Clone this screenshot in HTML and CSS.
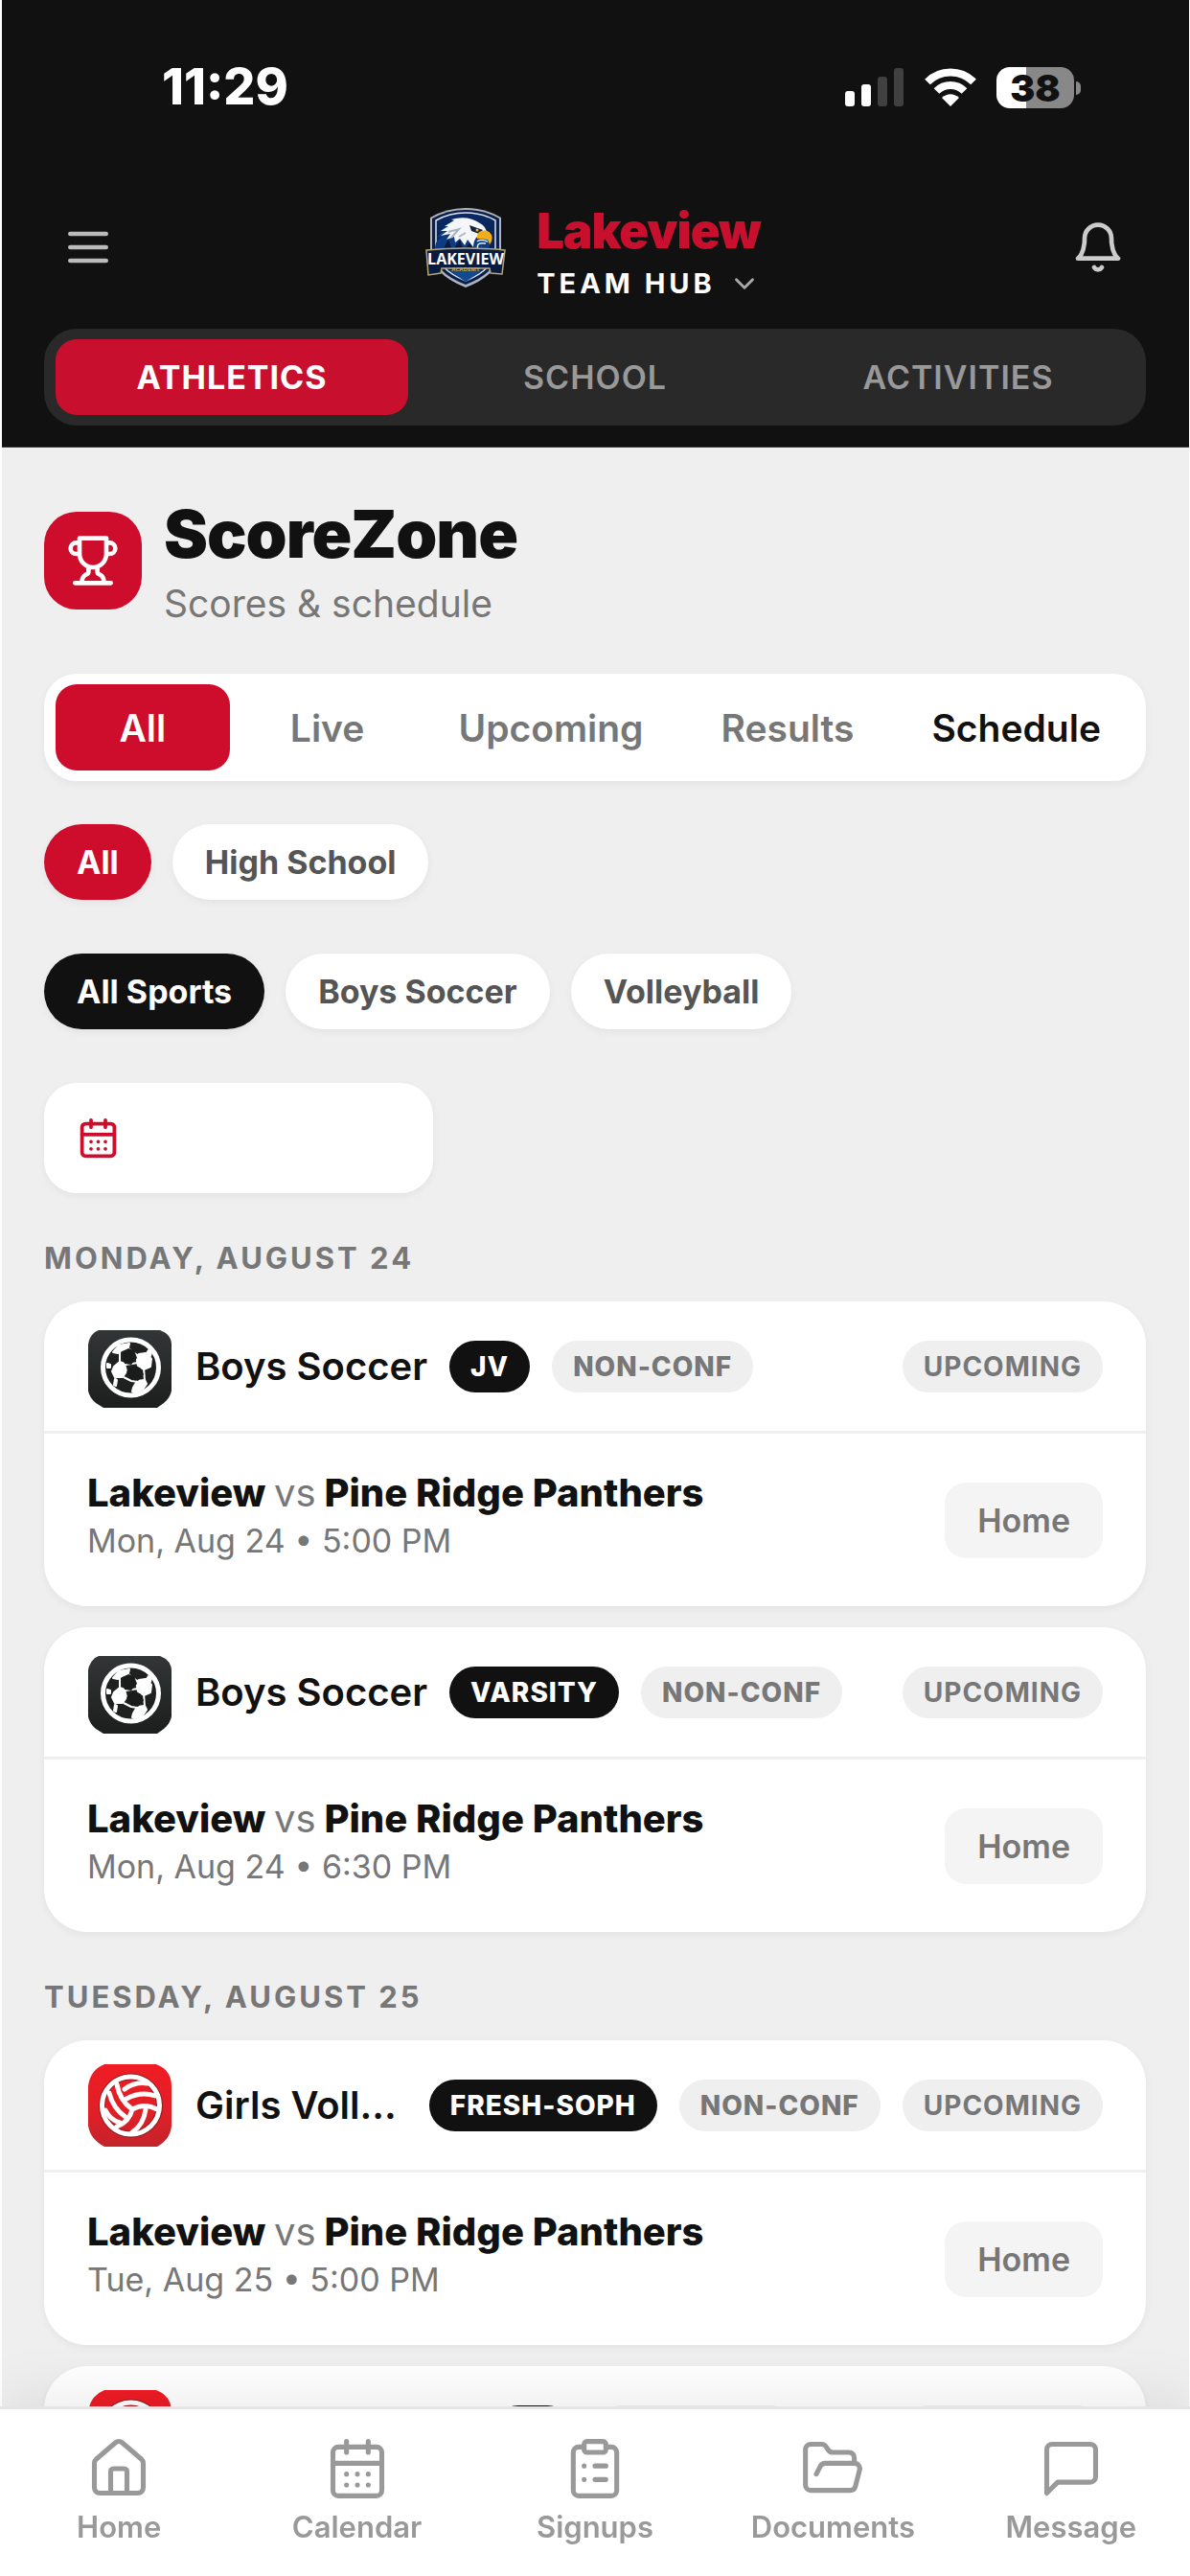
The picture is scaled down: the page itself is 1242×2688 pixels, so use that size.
FILE: index.html
```html
<!DOCTYPE html>
<html lang="en">
<head>
<meta charset="utf-8">
<meta name="viewport" content="width=device-width, initial-scale=1">
<title>ScoreZone</title>
<link rel="stylesheet" href="styles.css">
</head>
<body>
<svg class="sprite" aria-hidden="true">
  <defs>
    <linearGradient id="dark" x1="0" y1="0" x2="0" y2="1"><stop offset="0" stop-color="#333636"/><stop offset="1" stop-color="#1c1e1e"/></linearGradient>
    <linearGradient id="red" x1="0" y1="0" x2="0" y2="1"><stop offset="0" stop-color="#f01c24"/><stop offset=".6" stop-color="#e01f27"/><stop offset="1" stop-color="#c3232b"/></linearGradient>
    <linearGradient id="navy" x1="0" y1="0" x2="0" y2="1"><stop offset="0" stop-color="#0a2a66"/><stop offset="1" stop-color="#06183c"/></linearGradient>
  </defs>
  <symbol id="soccer" viewBox="0 0 90 90">
    <path d="M12 7H76L82 10Q88 15 88 22V70Q87 77 80 83L73 88H17L9 83Q2 77 1 70V22Q2 14 8 9Z" fill="url(#dark)"/>
    <circle cx="45.500" cy="46" r="29" fill="#1f2121" stroke="#fff" stroke-width="5"/>
    <g fill="#fff" stroke="#fff" stroke-width="2" stroke-linejoin="round">
      <path d="M27 30 33 23 44 21 43 25 36 28 32 31Z"/>
      <path d="M28 45 34 40 39 42 41 50 37 56 29 56 26 50Z"/>
      <path d="M51 34 54 32 61 31 67 37 66 45 59 48 53 44Z"/>
      <path d="M48 67 52 60 60 59 62 63 58 69 50 72 47 71Z"/>
      <path d="M21 42 24 43 24 46 21 46Z"/>
      <path d="M29 58 31 59 30 65 28 64Z"/>
      <path d="M64 28 67 30 66 34 62 31Z"/>
      <g fill="none"><path d="M34 42 34 30M40 43 53 41M43 26 52 33M38 56 46 60 53 61M59 46 60 60M61 33 65 30"/></g>
    </g>
    <path d="M37 31 43 26 49 28 52 36 46 43 39 42Z" fill="#1a1c1c"/>
    <path d="M41 50 47 45 55 46 59 53 53 60 45 58Z" fill="#1a1c1c"/>
  </symbol>
  <symbol id="volleyball" viewBox="0 0 90 90">
    <path d="M18 2H72Q88 8 88 25V66Q87 80 73 88H18Q3 80 1 66V25Q3 8 18 2Z" fill="url(#red)"/>
    <circle cx="45.500" cy="45" r="30" fill="none" stroke="#8e1b20" stroke-width="7"/>
    <g fill="none" stroke="#fff" stroke-width="5" stroke-linecap="round">
      <circle cx="45.500" cy="45" r="30"/>
      <path d="M31 23Q34 40 47 49Q60 42 73 49"/>
      <path d="M23 32Q27 48 40 57"/>
      <path d="M19 50Q24 60 34 63"/>
      <path d="M41 38Q56 30 71 35"/>
      <path d="M39 28Q50 20 63 22"/>
      <path d="M47 49Q44 62 31 67"/>
      <path d="M61 49Q59 65 47 73"/>
    </g>
  </symbol>
  <symbol id="calendar" viewBox="0 0 24 24">
    <path d="M8 2v4M16 2v4M3 10h18M8 14h.01M12 14h.01M16 14h.01M8 18h.01M12 18h.01M16 18h.01"/><rect x="3" y="4" width="18" height="18" rx="2"/>
  </symbol>
</svg>

<div class="app">
  <header class="top">
    <div class="status">
      <span class="time">11:29</span>
      <div class="status-icons">
        <svg width="62" height="40" viewBox="0 0 62 40" aria-hidden="true"><g fill="#fff"><rect x="0" y="24" width="10" height="16" rx="3"/><rect x="17" y="17" width="10" height="23" rx="3"/></g><g fill="#404040"><rect x="34" y="9" width="10" height="31" rx="3"/><rect x="51" y="0" width="10" height="40" rx="3"/></g></svg>
        <svg width="54" height="40" viewBox="0 0 54 40" aria-hidden="true"><g fill="none" stroke="#fff" stroke-width="8"><path d="M3 14.500A34 34 0 0 1 51 14.500"/><path d="M12.500 24A20.500 20.500 0 0 1 41.500 24"/></g><path d="M18 31Q27 23.500 36 31L27 40Z" fill="#fff"/></svg>
        <span class="battery"><span class="battery-level">38</span></span>
      </div>
    </div>
    <div class="brand-row">
      <button class="icon-btn" aria-label="Menu"><svg class="ic56" viewBox="0 0 24 24"><path d="M4 6h16M4 12h16M4 18h16"/></svg></button>
      <button class="brand">
        <svg class="crest" viewBox="0 0 84 84" aria-hidden="true">
          <path d="M42 1Q62 1 79 11V44Q78 70 42 84Q6 70 5 44V11Q22 1 42 1Z" fill="#aeb4bf"/>
          <path d="M42 3Q61 3 77 12V44Q76 68 42 81Q8 68 7 44V12Q23 3 42 3Z" fill="#0a1f4a"/>
          <path d="M42 6Q59 6 73 14V44Q72 65 42 77Q12 65 11 44V14Q25 6 42 6Z" fill="url(#navy)" stroke="#dfe4ee" stroke-width="1.500"/>
          <path d="M10 44Q10 34 18 31L12 32 17 26 14 26 22 19H28L58 26 70 36 62 48Z" fill="#0d3d80"/>
          <path d="M18 46 24 33 28 46 36 34 40 46 47 36 53 48" fill="#071a3f"/>
          <path d="M16 25 24 20 20 20 30 14 27 13Q44 8 57 17Q63 20 64 27L54 31Q50 35 50 42L44 34 41 40 36 33 31 37 30 31 22 34 26 28 16 30 23 25Z" fill="#f4f6fa"/>
          <path d="M24 26 35 23 27 32M35 31 42 27" fill="none" stroke="#aab3c2" stroke-width="2"/>
          <path d="M46 19 60 24 56 28 48 25Z" fill="#15223c"/><circle cx="54" cy="24" r="1.500" fill="#f6b61d"/>
          <path d="M56 26Q65 22 69 29Q71 34 67 39L65 34 54 33Q53 29 56 26Z" fill="#f2ad1b"/>
          <path d="M54 36Q57 33 65 36M55 45Q52 36 63 38" fill="none" stroke="#e8ecf4" stroke-width="1.500"/>
          <path d="M1 45Q42 41 83 45L80 70 68 69 67 64H17L16 69 3 71Z" fill="#0a1b40" stroke="#b5a878" stroke-width="1.500"/>
          <path d="M24 66 42 78 60 66Z" fill="#124991"/>
          <text class="crest-name" x="42" y="60" text-anchor="middle">LAKEVIEW</text>
          <text class="crest-sub" x="42" y="67" text-anchor="middle">ACADEMY</text>
        </svg>
        <span class="brand-text">
          <span class="brand-name">Lakeview</span>
          <span class="brand-sub">TEAM HUB <svg class="ic34" viewBox="0 0 24 24"><path d="m6 9 6 6 6-6"/></svg></span>
        </span>
      </button>
      <button class="icon-btn bell" aria-label="Notifications"><svg class="ic56" viewBox="0 0 24 24"><path d="M6 8a6 6 0 0 1 12 0c0 7 3 9 3 9H3s3-2 3-9M10.300 21a1.940 1.940 0 0 0 3.400 0"/></svg></button>
    </div>
    <nav class="areas" aria-label="Areas">
      <button class="area active">ATHLETICS</button>
      <button class="area">SCHOOL</button>
      <button class="area">ACTIVITIES</button>
    </nav>
  </header>

  <main class="content">
    <div class="page-head">
      <span class="page-icon"><svg class="ic56" viewBox="0 0 24 24" aria-hidden="true"><path d="M6 9H4.500a2.500 2.500 0 0 1 0-5H6M18 9h1.500a2.500 2.500 0 0 0 0-5H18M4 22h16M10 14.660V17c0 .55-.47.98-.97 1.210C7.850 18.750 7 20.240 7 22M14 14.660V17c0 .55.470.98.970 1.210C16.150 18.750 17 20.240 17 22M18 2H6v7a6 6 0 0 0 12 0V2Z"/></svg></span>
      <div>
        <h1>ScoreZone</h1>
        <p class="subtitle">Scores &amp; schedule</p>
      </div>
    </div>

    <nav class="tabs" aria-label="Views">
      <button class="tab active">All</button>
      <button class="tab">Live</button>
      <button class="tab">Upcoming</button>
      <button class="tab">Results</button>
      <button class="tab strong">Schedule</button>
    </nav>

    <div class="filters">
      <div class="chips"><button class="chip red">All</button><button class="chip">High School</button></div>
      <div class="chips"><button class="chip black">All Sports</button><button class="chip">Boys Soccer</button><button class="chip">Volleyball</button></div>
      <label class="date-field"><svg class="ic45" viewBox="0 0 24 24" aria-hidden="true"><use href="#calendar"/></svg><input type="text" aria-label="Date"></label>
    </div>

    <section class="day">
      <h2>MONDAY, AUGUST 24</h2>
      <article class="game">
        <div class="game-head">
          <svg class="sport" aria-hidden="true"><use href="#soccer"/></svg>
          <h3>Boys Soccer</h3><span class="badge dark">JV</span><span class="badge heavy">NON-CONF</span><span class="badge end">UPCOMING</span>
        </div>
        <div class="game-body">
          <div class="match"><p class="teams">Lakeview <span>vs</span> Pine Ridge Panthers</p><p class="when">Mon, Aug 24 • 5:00 PM</p></div>
          <span class="venue">Home</span>
        </div>
      </article>
      <article class="game">
        <div class="game-head">
          <svg class="sport" aria-hidden="true"><use href="#soccer"/></svg>
          <h3>Boys Soccer</h3><span class="badge dark">VARSITY</span><span class="badge heavy">NON-CONF</span><span class="badge end">UPCOMING</span>
        </div>
        <div class="game-body">
          <div class="match"><p class="teams">Lakeview <span>vs</span> Pine Ridge Panthers</p><p class="when">Mon, Aug 24 • 6:30 PM</p></div>
          <span class="venue">Home</span>
        </div>
      </article>
    </section>

    <section class="day">
      <h2>TUESDAY, AUGUST 25</h2>
      <article class="game">
        <div class="game-head">
          <svg class="sport" aria-hidden="true"><use href="#volleyball"/></svg>
          <h3>Girls Volleyball</h3><span class="badge dark">FRESH-SOPH</span><span class="badge heavy">NON-CONF</span><span class="badge end">UPCOMING</span>
        </div>
        <div class="game-body">
          <div class="match"><p class="teams">Lakeview <span>vs</span> Pine Ridge Panthers</p><p class="when">Tue, Aug 25 • 5:00 PM</p></div>
          <span class="venue">Home</span>
        </div>
      </article>
      <article class="game">
        <div class="game-head">
          <svg class="sport" aria-hidden="true"><use href="#volleyball"/></svg>
          <h3>Girls Volleyball</h3><span class="badge dark">JV</span><span class="badge heavy">NON-CONF</span><span class="badge end">UPCOMING</span>
        </div>
      </article>
    </section>
  </main>

  <nav class="bottom" aria-label="Main">
    <a href="#home"><svg class="ic68" viewBox="0 0 24 24"><path d="M15 21v-8a1 1 0 0 0-1-1h-4a1 1 0 0 0-1 1v8M3 10a2 2 0 0 1 .709-1.528l7-5.999a2 2 0 0 1 2.582 0l7 5.999A2 2 0 0 1 21 10v9a2 2 0 0 1-2 2H5a2 2 0 0 1-2-2z"/></svg>Home</a>
    <a href="#calendar-page"><svg class="ic68" viewBox="0 0 24 24"><use href="#calendar"/></svg>Calendar</a>
    <a href="#signups"><svg class="ic68" viewBox="0 0 24 24"><rect x="8" y="2" width="8" height="4" rx="1"/><path d="M16 4h2a2 2 0 0 1 2 2v14a2 2 0 0 1-2 2H6a2 2 0 0 1-2-2V6a2 2 0 0 1 2-2h2M12 11h4M12 16h4M8 11h.01M8 16h.01"/></svg>Signups</a>
    <a href="#documents"><svg class="ic68" viewBox="0 0 24 24"><path d="m6 14 1.500-2.900A2 2 0 0 1 9.240 10H20a2 2 0 0 1 1.940 2.500l-1.540 6a2 2 0 0 1-1.950 1.500H4a2 2 0 0 1-2-2V5a2 2 0 0 1 2-2h3.900a2 2 0 0 1 1.690.9l.81 1.200a2 2 0 0 0 1.670.9H18a2 2 0 0 1 2 2v2"/></svg>Documents</a>
    <a href="#message"><svg class="ic68" viewBox="0 0 24 24"><path d="M21 15a2 2 0 0 1-2 2H7l-4 4V5a2 2 0 0 1 2-2h14a2 2 0 0 1 2 2z"/></svg>Message</a>
  </nav>
</div>
</body>
</html>
```
FILE: styles.css
```css
* { box-sizing: border-box; }
body { margin: 0; background: #fff; color: #111; font-family: Inter, "Liberation Sans", sans-serif; }
h1, h2, h3, p { margin: 0; }
button { border: 0; margin: 0; padding: 0; background: none; font: inherit; color: inherit; cursor: pointer; }
.sprite { position: absolute; width: 0; height: 0; }
.app { display: flex; flex-direction: column; height: 100vh; }

.ic34, .ic45, .ic56, .ic68 { display: block; flex: none; fill: none; stroke: currentColor; stroke-width: 2; stroke-linecap: round; stroke-linejoin: round; }
.ic34 { width: 34px; height: 34px; }
.ic45 { width: 45px; height: 45px; }
.ic56 { width: 56px; height: 56px; }
.ic68 { width: 68px; height: 68px; stroke-width: 1.8; }

/* header */
.top { flex: none; margin: 0 1px 0 2px; padding: 0 45px 22px 44px; background: #111; border-bottom: 1px solid #333; }
.status { display: flex; align-items: center; justify-content: space-between; height: 182px; padding: 0 75px 0 123px; }
.time { color: #fff; font-size: 52px; font-weight: 800; line-height: 60px; }
.status-icons { display: flex; align-items: center; gap: 21px; }
.battery { position: relative; display: block; width: 81px; height: 43px; border-radius: 14px; background: linear-gradient(90deg, #fff 31px, #888 31px); }
.battery::after { content: ""; position: absolute; left: 83px; top: 15px; width: 5px; height: 14px; border-radius: 0 5px 5px 0; background: #888; }
.battery-level { display: block; text-align: center; font-size: 39px; font-weight: 900; line-height: 43px; color: #111; }
.brand-row { display: grid; grid-template-columns: 1fr auto 1fr; align-items: center; padding: 0 22px 0 18px; margin-top: 21px; }
.icon-btn { color: #bbb; justify-self: start; }
.bell { color: #ccc; justify-self: end; }
.brand { display: flex; align-items: center; gap: 32px; text-align: left; }
.crest { width: 84px; height: 84px; }
.crest-name { font: 700 16px "Open Sans", sans-serif; fill: #fff; }
.crest-sub { font: 700 6px "Open Sans", sans-serif; fill: #d0a93a; }
.brand-name, .brand-sub { display: flex; align-items: center; }
.brand-name { color: #c8102e; font-size: 51px; font-weight: 900; line-height: 75px; letter-spacing: -1px; }
.brand-sub { gap: 13px; color: #fff; font-size: 29px; font-weight: 700; line-height: 35px; letter-spacing: 4px; }
.brand-sub svg { color: #aaa; }
.areas { display: grid; grid-template-columns: repeat(3, 1fr); gap: 11px; margin-top: 30px; padding: 11px 12px; border-radius: 34px; background: #292929; }
.area { height: 79px; border-radius: 22px; color: #999; font-size: 34px; font-weight: 600; letter-spacing: 1px; }
.area.active { background: #c8102e; color: #fff; font-weight: 700; }

/* page */
.content { flex: 1; min-height: 0; overflow: auto; scrollbar-width: none; margin: 0 1px 0 2px; padding: 45px 45px 45px 44px; background: #efefef; }
.page-head { display: flex; align-items: center; gap: 23px; }
.page-icon { display: grid; place-items: center; width: 102px; height: 102px; border-radius: 34px; background: #ce0c2c; color: #fff; }
h1 { font-size: 69px; font-weight: 900; line-height: 90px; letter-spacing: -1px; }
.subtitle { color: #777; font-size: 39px; line-height: 56px; }
.tabs { display: flex; gap: 11px; margin-top: 45px; padding: 11px 12px; border-radius: 34px; background: #fff; box-shadow: 0 3px 8px rgba(0, 0, 0, .05); }
.tab { flex: 1 1 0; height: 90px; padding: 0 35px; border-radius: 22px; color: #777; font-size: 39px; font-weight: 600; }
.tab.active { background: #ce0c2c; color: #fff; }
.tab.strong { color: #111; }
.filters { display: flex; flex-direction: column; align-items: flex-start; gap: 56px; margin-top: 45px; }
.chips { display: flex; gap: 22px; }
.chip { height: 79px; padding: 0 34px; border-radius: 40px; background: #fff; color: #555; font-size: 34px; font-weight: 700; box-shadow: 0 3px 8px rgba(0, 0, 0, .05); }
.chip.red { background: #ce0c2c; color: #fff; }
.chip.black { background: #111; color: #fff; }
.date-field { display: flex; align-items: center; gap: 22px; width: 406px; height: 115px; padding: 0 34px; border-radius: 34px; background: #fff; color: #ce0c2c; box-shadow: 0 3px 8px rgba(0, 0, 0, .05); }
.date-field input { flex: 1; min-width: 0; border: 0; padding: 0; background: none; font: 600 39px Inter, sans-serif; color: #111; outline: 0; }

/* games */
.day { display: flex; flex-direction: column; gap: 22px; margin-top: 45px; }
h2 { color: #777; font-size: 31px; font-weight: 700; line-height: 46px; letter-spacing: 3px; }
.game { border-radius: 45px; background: #fff; box-shadow: 0 3px 8px rgba(0, 0, 0, .05); }
.game-head { display: flex; align-items: center; gap: 23px; height: 138px; padding: 0 45px; border-bottom: 3px solid #efefef; }
.sport { flex: none; width: 90px; height: 90px; }
h3 { min-width: 0; overflow: hidden; white-space: nowrap; text-overflow: ellipsis; font-size: 40px; font-weight: 600; line-height: 56px; }
.badge { flex: none; padding: 0 22px; border-radius: 27px; background: #efefef; color: #777; font-size: 28px; font-weight: 700; line-height: 54px; letter-spacing: 1px; }
.badge.heavy { font-weight: 800; }
.badge.dark { background: #111; color: #fff; font-weight: 800; }
.badge.end { margin-left: auto; }
.game-body { display: flex; align-items: center; justify-content: space-between; height: 180px; padding: 0 45px; }
.match { padding-bottom: 12px; }
.teams { font-size: 40px; font-weight: 800; line-height: 56px; }
.teams span { color: #777; font-weight: 400; }
.when { color: #777; font-size: 34px; line-height: 44px; }
.venue { padding: 0 34px; border-radius: 22px; background: #f4f4f4; color: #777; font-size: 34px; font-weight: 600; line-height: 79px; }

/* bottom bar */
.bottom { position: relative; flex: none; display: grid; grid-template-columns: repeat(5, 1fr); padding: 28px 0 32px; background: #fff; border-top: 3px solid #e5e5e5; box-shadow: 0 -11px 56px rgba(0, 0, 0, .08); }
.bottom a { display: flex; flex-direction: column; align-items: center; gap: 8px; color: #999; font-size: 31px; font-weight: 600; line-height: 38px; text-decoration: none; }
```
